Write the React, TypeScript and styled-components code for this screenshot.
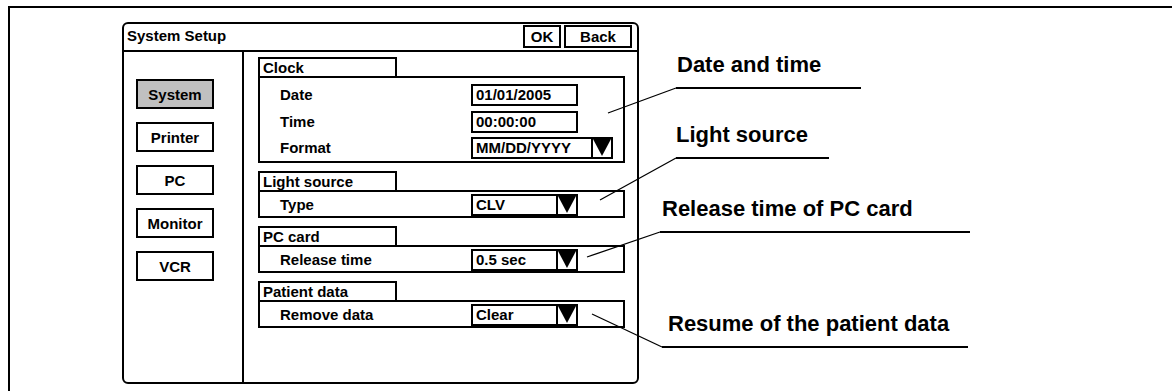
import React from 'react';
import styled, { createGlobalStyle } from 'styled-components';

const GlobalStyle = createGlobalStyle`
  html, body {
    margin: 0;
    padding: 0;
    background: #ffffff;
    overflow: hidden;
  }
  body {
    font-family: "Liberation Sans", Arial, sans-serif;
    color: #000000;
  }
`;

const Page = styled.div`
  position: relative;
  width: 1172px;
  height: 391px;
  overflow: hidden;
`;

// outer figure frame: only its top and left edges fall inside the picture
const Frame = styled.div`
  margin: 6px 0 0 8px;
  width: 1200px;
  height: 420px;
  border: 2px solid #000;
  box-sizing: border-box;
  padding: 14px 0 0 112px;
  display: flex;
  align-items: flex-start;
`;

const Dialog = styled.div`
  width: 517px;
  height: 362px;
  box-sizing: border-box;
  border: 2px solid #000;
  border-radius: 6px;
  display: flex;
  flex-direction: column;
  font-size: 15px;
  font-weight: bold;
`;

const TitleBar = styled.div`
  height: 28px;
  box-sizing: border-box;
  border-bottom: 2px solid #000;
  display: flex;
  align-items: flex-start;
  justify-content: space-between;
  padding: 0 5px 0 3px;
`;

const Title = styled.span`
  margin-top: 3px;
`;

const ButtonGroup = styled.div`
  display: flex;
  gap: 3px;
  margin-top: 1px;
`;

const TitleButton = styled.div<{ $w: number }>`
  width: ${p => p.$w}px;
  height: 23px;
  box-sizing: border-box;
  border: 2px solid #000;
  display: flex;
  align-items: center;
  justify-content: center;
`;

const Body = styled.div`
  flex: 1;
  display: flex;
`;

const Sidebar = styled.div`
  width: 120px;
  box-sizing: border-box;
  border-right: 2px solid #000;
  padding: 27px 0 0 12px;
  display: flex;
  flex-direction: column;
  gap: 13px;
`;

const NavButton = styled.div<{ $active?: boolean }>`
  width: 78px;
  height: 30px;
  box-sizing: border-box;
  border: 2px solid #000;
  background: ${p => (p.$active ? '#c0c0c0' : '#ffffff')};
  display: flex;
  align-items: center;
  justify-content: center;
`;

const Content = styled.div`
  flex: 1;
  padding: 5px 12px 0 14px;
  display: flex;
  flex-direction: column;
  gap: 8px;
`;

const Section = styled.div`
  display: flex;
  flex-direction: column;
`;

const Tab = styled.div`
  width: 139px;
  height: 19px;
  box-sizing: border-box;
  border: 2px solid #000;
  border-bottom: none;
  padding-left: 3px;
  line-height: 17px;
`;

const SectionBox = styled.div<{ $pad: string }>`
  border: 2px solid #000;
  padding: ${p => p.$pad};
  display: grid;
  grid-template-columns: 191px auto;
  row-gap: 4.5px;
  align-items: center;
`;

const Label = styled.span`
  line-height: 22px;
`;

const Field = styled.div<{ $w: number }>`
  width: ${p => p.$w}px;
  height: 22px;
  box-sizing: border-box;
  border: 2px solid #000;
  display: flex;
  align-items: stretch;
`;

const FieldText = styled.span`
  flex: 1;
  padding-left: 3px;
  line-height: 18px;
  white-space: nowrap;
`;

const ArrowCell = styled.div`
  width: 20px;
  box-sizing: border-box;
  border-left: 2px solid #000;
  display: flex;
`;

const Callouts = styled.div`
  margin-left: 21px;
  display: flex;
  flex-direction: column;
  font-size: 22px;
  font-weight: bold;
`;

const Callout = styled.div<{ $top: number; $left: number; $w: number; $indent: number }>`
  margin-top: ${p => p.$top}px;
  margin-left: ${p => p.$left}px;
  width: ${p => p.$w}px;
  padding: 0 0 10px ${p => p.$indent}px;
  box-sizing: border-box;
  border-bottom: 2px solid #000;
  line-height: 24px;
  white-space: nowrap;
`;

const Leaders = styled.svg`
  position: absolute;
  left: 0;
  top: 0;
  pointer-events: none;
`;

const DownArrow = () => (
  <svg width="18" height="18" viewBox="0 0 18 18" preserveAspectRatio="none">
    <polygon points="0,0 18,0 9,17" fill="#000" />
  </svg>
);

const Dropdown = ({ w, value }: { w: number; value: string }) => (
  <Field $w={w}>
    <FieldText>{value}</FieldText>
    <ArrowCell>
      <DownArrow />
    </ArrowCell>
  </Field>
);

const navItems = ['System', 'Printer', 'PC', 'Monitor', 'VCR'];

const callouts = [
  { text: 'Date and time', top: 31, left: 16, w: 185, indent: 1 },
  { text: 'Light source', top: 34, left: 16, w: 153, indent: 0 },
  { text: 'Release time of PC card', top: 38, left: 0, w: 310, indent: 2 },
  { text: 'Resume of the patient data', top: 79, left: 2, w: 306, indent: 6 }
];

const leaderLines = [
  [608, 113, 676, 88],
  [600, 200, 676, 158],
  [587, 257, 660, 232],
  [592, 314, 662, 347]
];

export default function App() {
  return (
    <Page>
      <GlobalStyle />
      <Frame>
        <Dialog>
          <TitleBar>
            <Title>System Setup</Title>
            <ButtonGroup>
              <TitleButton $w={38}>OK</TitleButton>
              <TitleButton $w={68}>Back</TitleButton>
            </ButtonGroup>
          </TitleBar>
          <Body>
            <Sidebar>
              {navItems.map(item => (
                <NavButton key={item} $active={item === 'System'}>
                  {item}
                </NavButton>
              ))}
            </Sidebar>
            <Content>
              <Section>
                <Tab>Clock</Tab>
                <SectionBox $pad="6px 0 2px 20px">
                  <Label>Date</Label>
                  <Field $w={107}>
                    <FieldText>01/01/2005</FieldText>
                  </Field>
                  <Label>Time</Label>
                  <Field $w={107}>
                    <FieldText>00:00:00</FieldText>
                  </Field>
                  <Label>Format</Label>
                  <Dropdown w={142} value="MM/DD/YYYY" />
                </SectionBox>
              </Section>
              <Section>
                <Tab>Light source</Tab>
                <SectionBox $pad="1.5px 0 0.5px 20px">
                  <Label>Type</Label>
                  <Dropdown w={107} value="CLV" />
                </SectionBox>
              </Section>
              <Section>
                <Tab>PC card</Tab>
                <SectionBox $pad="1.5px 0 0.5px 20px">
                  <Label>Release time</Label>
                  <Dropdown w={107} value="0.5 sec" />
                </SectionBox>
              </Section>
              <Section>
                <Tab>Patient data</Tab>
                <SectionBox $pad="1.5px 0 0.5px 20px">
                  <Label>Remove data</Label>
                  <Dropdown w={107} value="Clear" />
                </SectionBox>
              </Section>
            </Content>
          </Body>
        </Dialog>
        <Callouts>
          {callouts.map(c => (
            <Callout key={c.text} $top={c.top} $left={c.left} $w={c.w} $indent={c.indent}>
              {c.text}
            </Callout>
          ))}
        </Callouts>
      </Frame>
      <Leaders width="1172" height="391" viewBox="0 0 1172 391">
        {leaderLines.map(([x1, y1, x2, y2], i) => (
          <line key={i} x1={x1} y1={y1} x2={x2} y2={y2} stroke="#000" strokeWidth="1.3" />
        ))}
      </Leaders>
    </Page>
  );
}
